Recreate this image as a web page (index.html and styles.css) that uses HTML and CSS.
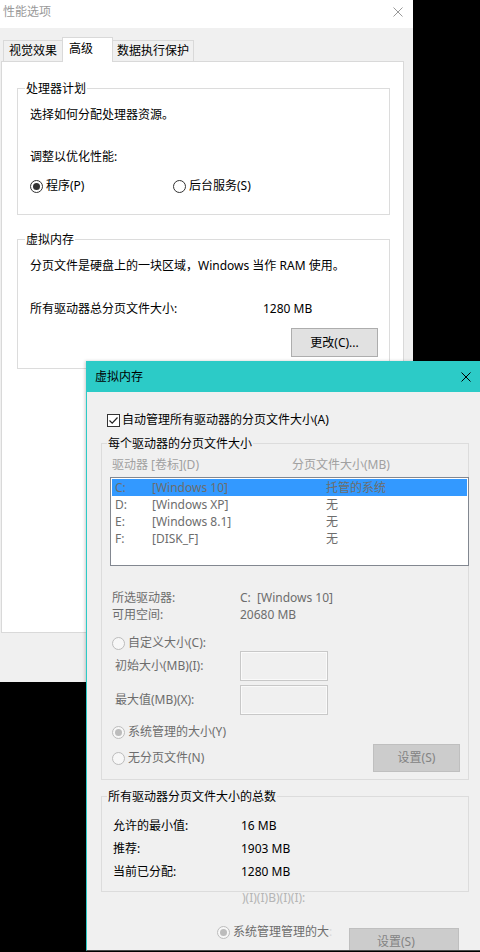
FILE: index.html
```html
<!DOCTYPE html>
<html lang="zh-CN">
<head>
<meta charset="utf-8">
<title>性能选项</title>
<link rel="stylesheet" href="styles.css">
</head>
<body>
<div class="perf">
  <div class="perf-title">
    <span class="perf-title-text">性能选项</span>
    <svg class="x-icon x-grey" width="10" height="10" viewBox="0 0 10 10"><path d="M0.5 0.5L9.5 9.5M9.5 0.5L0.5 9.5" stroke="#999" stroke-width="1" fill="none"/></svg>
  </div>
  <div class="tabs">
    <div class="tab tab-1">视觉效果</div>
    <div class="tab tab-2">高级</div>
    <div class="tab tab-3">数据执行保护</div>
  </div>
  <div class="panel">
    <fieldset class="grp grp-back grp-cpu">
      <legend>处理器计划</legend>
      <div class="gbody gbody-cpu">
        <p>选择如何分配处理器资源。</p>
        <p class="t-adjust">调整以优化性能:</p>
        <div class="radio-row">
          <div class="radio radio-first"><span class="rb on"></span><span>程序(P)</span></div>
          <div class="radio"><span class="rb"></span><span>后台服务(S)</span></div>
        </div>
      </div>
    </fieldset>
    <fieldset class="grp grp-back grp-vm">
      <legend>虚拟内存</legend>
      <div class="gbody gbody-vm">
        <p>分页文件是硬盘上的一块区域，Windows 当作 RAM 使用。</p>
        <div class="total-row"><span class="total-k">所有驱动器总分页文件大小:</span><span>1280 MB</span></div>
        <div class="btn btn-change">更改(C)...</div>
      </div>
    </fieldset>
  </div>
</div>

<div class="vm">
  <div class="vm-title">
    <span class="vm-title-text">虚拟内存</span>
    <span class="vm-close"><svg width="10" height="10" viewBox="0 0 10 10"><path d="M0.5 0.5L9.5 9.5M9.5 0.5L0.5 9.5" stroke="#000" stroke-width="1" fill="none"/></svg></span>
  </div>
  <div class="vm-body">
    <div class="check-row">
      <span class="cb"><svg width="11" height="11" viewBox="0 0 11 11"><path d="M1.5 5.5L4.2 8.2L9.5 2.5" stroke="#222" stroke-width="1.2" fill="none"/></svg></span>
      <span class="check-label">自动管理所有驱动器的分页文件大小(A)</span>
    </div>

    <fieldset class="grp grp-vm-a">
      <legend>每个驱动器的分页文件大小</legend>
      <div class="gbody gbody-a">
        <div class="hdr"><span class="hdr-1">驱动器 [卷标](D)</span><span>分页文件大小(MB)</span></div>
        <div class="list">
          <div class="row sel"><span class="c1">C:</span><span class="c2">[Windows 10]</span><span>托管的系统</span></div>
          <div class="row"><span class="c1">D:</span><span class="c2">[Windows XP]</span><span>无</span></div>
          <div class="row"><span class="c1">E:</span><span class="c2">[Windows 8.1]</span><span>无</span></div>
          <div class="row"><span class="c1">F:</span><span class="c2">[DISK_F]</span><span>无</span></div>
        </div>
        <div class="info">
          <div class="kv"><span class="k">所选驱动器:</span><span>C:&nbsp;&nbsp;[Windows 10]</span></div>
          <div class="kv"><span class="k">可用空间:</span><span>20680 MB</span></div>
        </div>
        <div class="radio dis radio-custom"><span class="rb dis"></span><span>自定义大小(C):</span></div>
        <div class="size-row"><span class="k">初始大小(MB)(I):</span><span class="inp"></span></div>
        <div class="size-row"><span class="k">最大值(MB)(X):</span><span class="inp"></span></div>
        <div class="radio dis radio-sys"><span class="rb dis on"></span><span>系统管理的大小(Y)</span></div>
        <div class="none-row">
          <div class="radio dis"><span class="rb dis"></span><span>无分页文件(N)</span></div>
          <div class="btn btn-dis btn-set">设置(S)</div>
        </div>
      </div>
    </fieldset>

    <fieldset class="grp grp-vm-b">
      <legend>所有驱动器分页文件大小的总数</legend>
      <div class="gbody gbody-b">
        <div class="sum"><span class="k">允许的最小值:</span><span>16 MB</span></div>
        <div class="sum"><span class="k">推荐:</span><span>1903 MB</span></div>
        <div class="sum"><span class="k">当前已分配:</span><span>1280 MB</span></div>
      </div>
    </fieldset>

    <div class="ghost-text">)(I)(I)B)(I)(I):</div>
    <div class="ghost-row">
      <div class="radio dis ghost-radio"><span class="rb dis on"></span><span>系统管理管理的大<span class="faint">:</span></span></div>
      <div class="btn btn-dis btn-ghost">设置(S)</div>
    </div>
  </div>
</div>
</body>
</html>
```

FILE: styles.css
```css
* { box-sizing: border-box; }
html, body { margin: 0; padding: 0; }
body {
  width: 480px;
  height: 952px;
  background: #000;
  overflow: hidden;
  position: relative;
  font-family: "Noto Sans", "Noto Sans CJK SC", sans-serif;
  font-size: 12px;
  line-height: 16px;
  color: #000;
}
p { margin: 0; }

/* ---------- back window ---------- */
.perf {
  width: 413px;
  height: 682px;
  background: #f0f0f0;
}
.perf-title {
  height: 28px;
  background: #fff;
  display: flex;
  align-items: flex-start;
}
.perf-title-text {
  flex: 1;
  padding: 4px 0 0 3px;
  color: #999;
}
.x-grey { margin: 7px 10px 0 0; }

.tabs {
  height: 33px;
  display: flex;
  align-items: flex-end;
  padding-left: 3px;
}
.tab {
  height: 21px;
  border: 1px solid #d9d9d9;
  border-bottom: 0;
  background: #f0f0f0;
  padding-top: 2px;
  white-space: nowrap;
}
.tab-1 { width: 60px; padding-left: 5px; }
.tab-2 {
  width: 51px;
  height: 25px;
  margin-left: -1px;
  margin-bottom: -1px;
  background: #fff;
  position: relative;
  padding: 3px 0 0 6px;
}
.tab-3 { width: 82px; margin-left: -1px; padding-left: 4px; }

.panel {
  margin-left: 1px;
  width: 403px;
  height: 572px;
  background: #fff;
  border: 1px solid #d9d9d9;
}

.grp {
  margin: 0;
  padding: 0;
  border: 1px solid #dcdcdc;
  min-width: 0;
}
.grp > legend {
  padding: 0 1px;
  line-height: 17px;
}
.grp-back { margin-left: 15px; width: 373px; }
.grp-back > legend { margin-left: 7px; }
.grp-cpu { margin-top: 18px; }
.grp-vm { margin-top: 16px; }

.gbody-cpu { padding: 10px 0 20px 12px; }
.t-adjust { margin-top: 26px; }
.radio-row { margin-top: 13px; display: flex; }
.radio { display: flex; align-items: center; height: 16px; white-space: nowrap; }
.radio-first { width: 143px; }
.rb {
  width: 13px;
  height: 13px;
  border: 1px solid #333;
  border-radius: 50%;
  background: #fff;
  margin-right: 3px;
  display: flex;
  align-items: center;
  justify-content: center;
  flex: none;
}
.rb.on::after {
  content: "";
  width: 7px;
  height: 7px;
  border-radius: 50%;
  background: #333;
}
.rb.dis { border-color: #bcbcbc; background: #f7f7f7; }
.rb.dis.on::after { background: #bcbcbc; }
.radio.dis { color: #6d6d6d; }

.gbody-vm { padding: 10px 0 11px 12px; }
.total-row { margin-top: 27px; display: flex; }
.total-k { width: 233px; }
.btn {
  display: flex;
  align-items: center;
  justify-content: center;
  background: #e1e1e1;
  border: 1px solid #adadad;
  white-space: nowrap;
}
.btn-change {
  width: 87px;
  height: 29px;
  margin: 11px 11px 0 auto;
}

/* ---------- overlay dialog ---------- */
.vm {
  position: absolute;
  left: 86px;
  top: 361px;
  width: 403px;
  height: 590px;
  background: #f0f0f0;
  border-left: 1px solid #2ccbc7;
  border-bottom: 1px solid #4a4a4a;
  overflow: hidden;
  box-shadow: -1px 0 3px rgba(0, 0, 0, 0.2);
}
.vm-title {
  height: 31px;
  background: #2ccbc7;
  display: flex;
  align-items: center;
}
.vm-title-text { flex: 1; padding-left: 8px; }
.vm-close {
  width: 46px;
  display: flex;
  justify-content: center;
}
.vm-close svg { display: block; }

.vm-body { padding-top: 20px; }
.check-row {
  padding-left: 20px;
  display: flex;
  align-items: center;
  height: 16px;
}
.cb {
  width: 13px;
  height: 13px;
  border: 1px solid #333;
  background: #fff;
  display: flex;
  align-items: center;
  justify-content: center;
}
.cb svg { display: block; }
.check-label { margin-left: 2px; }

.grp-vm-a, .grp-vm-b { margin-left: 14px; width: 368px; }
.grp-vm-a { margin-top: 7px; }
.grp-vm-b { margin-top: 8px; }
.grp-vm-a > legend, .grp-vm-b > legend { margin-left: 5px; }

.gbody-a { padding-bottom: 7px; }
.hdr {
  margin-top: 5px;
  padding-left: 10px;
  display: flex;
  color: #a0a0a0;
}
.hdr-1 { width: 180px; }
.list {
  margin: 4px 0 0 8px;
  width: 359px;
  height: 89px;
  border: 1px solid #828790;
  background: #fff;
  padding: 1px;
  color: #6d6d6d;
}
.row {
  height: 17px;
  line-height: 17px;
  display: flex;
  padding-left: 3px;
  white-space: nowrap;
}
.row.sel { background: #3399ff; }
.c1 { width: 37px; }
.c2 { width: 174px; }

.info {
  margin-top: 23px;
  padding-left: 10px;
  color: #6d6d6d;
  line-height: 17px;
}
.kv { display: flex; }
.kv .k { width: 128px; }

.radio-custom { margin-top: 12px; padding-left: 10px; }
.size-row {
  display: flex;
  align-items: center;
  height: 30px;
  padding-left: 13px;
  color: #6d6d6d;
}
.size-row + .size-row { margin-top: 4px; }
.size-row .k { width: 125px; }
.inp {
  width: 88px;
  height: 30px;
  border: 1px solid #c8c8c8;
  background: #f0f0f0;
  box-shadow: inset 0 0 0 1px #fafafa;
}
.radio-sys { margin-top: 9px; padding-left: 10px; }
.none-row {
  margin-top: 4px;
  height: 28px;
  display: flex;
  align-items: center;
  padding-left: 10px;
}
.btn-dis {
  background: #cccccc;
  border: 1px solid #bfbfbf;
  color: #838383;
}
.btn-set {
  margin-left: auto;
  margin-right: 8px;
  width: 87px;
  height: 28px;
}

.gbody-b { padding: 13px 0 11px 11px; }
.sum { display: flex; }
.sum + .sum { margin-top: 7px; }
.sum .k { width: 128px; }

.ghost-text {
  margin-top: -2px;
  padding-left: 155px;
  color: #b5b5b5;
}
.ghost-row {
  margin-top: 18px;
  display: flex;
  align-items: flex-start;
  padding-left: 130px;
}
.ghost-radio { width: 132px; }
.faint { color: #d8d8d8; }
.btn-ghost {
  margin-top: 4px;
  width: 110px;
  height: 28px;
  justify-content: flex-start;
  padding-left: 27px;
}
```
